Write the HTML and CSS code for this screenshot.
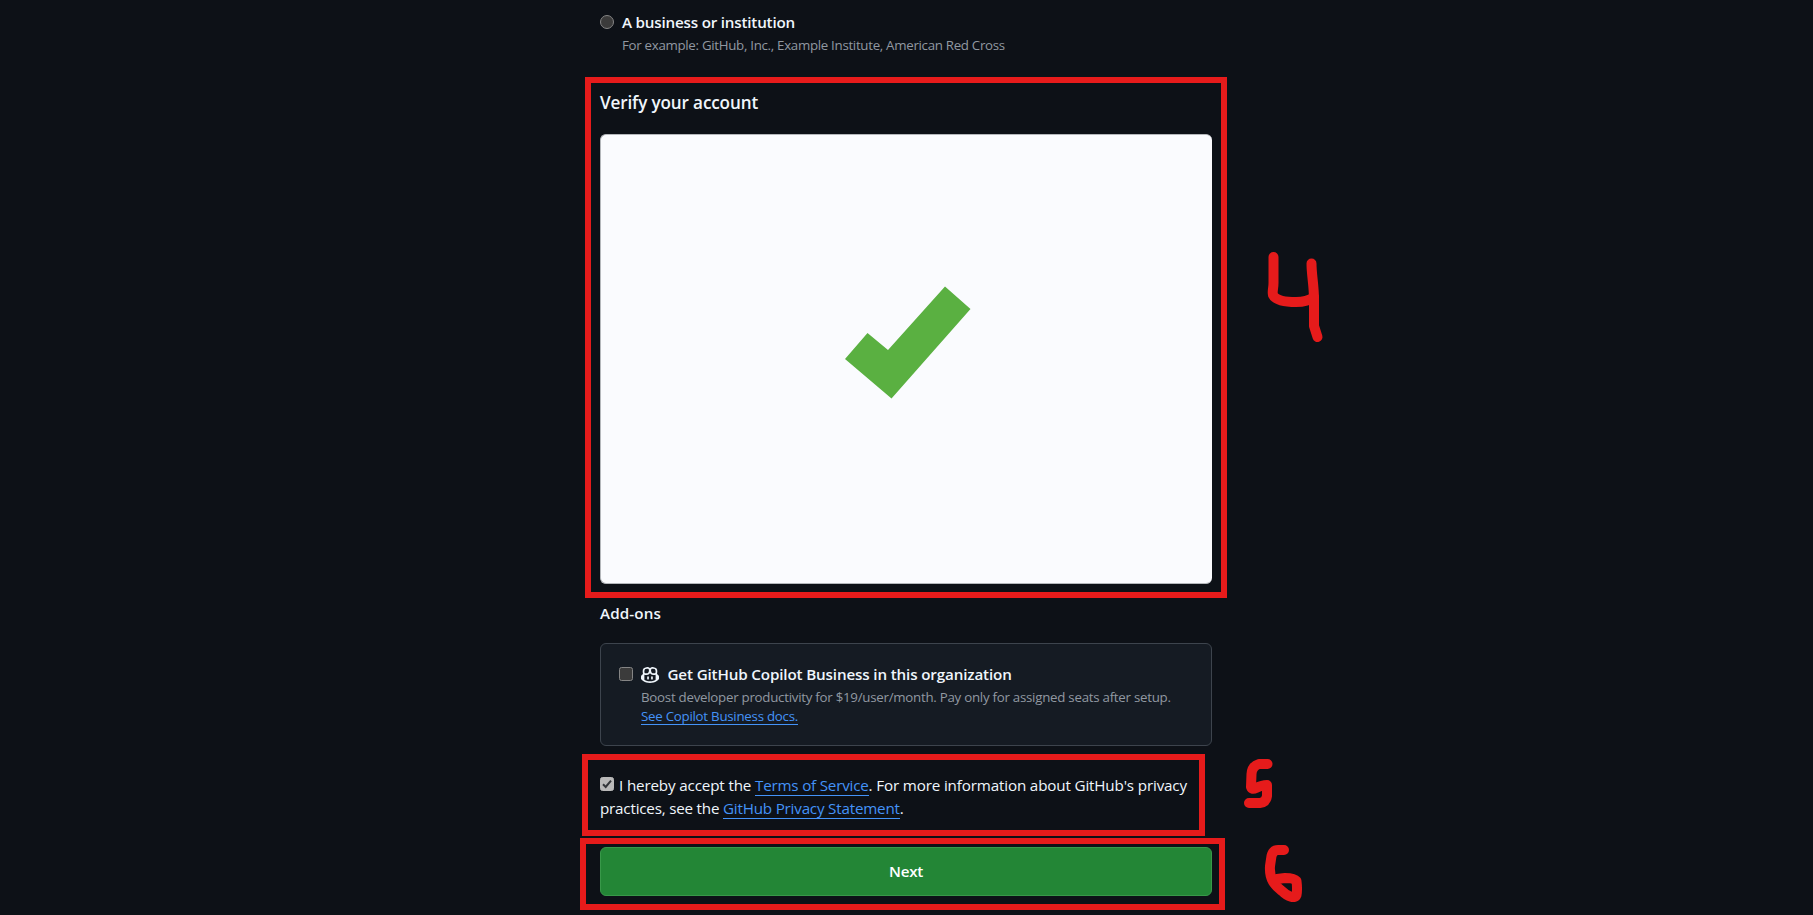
FILE: index.html
```
<!DOCTYPE html>
<html lang="en">
<head>
<meta charset="utf-8">
<title>Set up your organization</title>
<link rel="stylesheet" href="styles.css">
</head>
<body>
<main class="form">
  <div class="option">
    <span class="radio"></span>
    <div>
      <div class="option-title">A business or institution</div>
      <div class="option-note">For example: GitHub, Inc., Example Institute, American Red Cross</div>
    </div>
  </div>
  <h2 class="verify-title">Verify your account</h2>
  <div class="verify-panel">
    <svg class="tick" viewBox="0 0 126 113"><path d="M0 73 22.5 47 43 64 100 0.5 125.5 23 46.5 112.5Z"/></svg>
  </div>
  <h3 class="addons-title">Add-ons</h3>
  <section class="addon">
    <span class="box"></span>
    <div>
      <div class="addon-head">
        <svg class="copilot" viewBox="0 0 16 16"><path d="M7.998 15.035c-4.562 0-7.873-2.914-7.998-3.749V9.338c.085-.628.677-1.686 1.588-2.065.013-.07.024-.143.036-.218.029-.183.06-.384.126-.612-.201-.508-.254-1.084-.254-1.656 0-.87.128-1.769.693-2.484.579-.733 1.494-1.124 2.724-1.261 1.206-.134 2.262.034 2.944.765.05.053.096.108.139.165.044-.057.094-.112.143-.165.682-.731 1.738-.899 2.944-.765 1.23.137 2.145.528 2.724 1.261.566.715.693 1.614.693 2.484 0 .572-.053 1.148-.254 1.656.066.228.098.429.126.612.012.076.024.148.037.218.924.385 1.522 1.471 1.591 2.095v1.872c0 .766-3.351 3.795-8.002 3.795Zm0-1.485c2.28 0 4.584-1.11 5.002-1.433V7.862l-.023-.116c-.49.21-1.075.291-1.727.291-1.146 0-2.059-.327-2.71-.991A3.222 3.222 0 0 1 8 6.303a3.24 3.24 0 0 1-.544.743c-.65.664-1.563.991-2.71.991-.652 0-1.236-.081-1.727-.291l-.023.116v4.255c.419.323 2.722 1.433 5.002 1.433ZM6.762 2.83c-.193-.206-.637-.413-1.682-.297-1.019.113-1.479.404-1.713.7-.247.312-.369.789-.369 1.554 0 .793.129 1.171.308 1.371.162.181.519.379 1.442.379.853 0 1.339-.235 1.638-.54.315-.322.527-.827.617-1.553.117-.935-.037-1.395-.241-1.614Zm4.155-.297c-1.044-.116-1.488.091-1.681.297-.204.219-.359.679-.242 1.614.091.726.303 1.231.618 1.553.299.305.784.54 1.638.54.922 0 1.28-.198 1.442-.379.179-.2.308-.578.308-1.371 0-.765-.123-1.242-.37-1.554-.233-.296-.693-.587-1.713-.7Z"/><path d="M6.25 9.037a.75.75 0 0 1 .75.75v1.501a.75.75 0 0 1-1.5 0V9.787a.75.75 0 0 1 .75-.75Zm4.25.75v1.501a.75.75 0 0 1-1.5 0V9.787a.75.75 0 0 1 1.5 0Z"/></svg>
        <span class="addon-name">Get GitHub Copilot Business in this organization</span>
      </div>
      <div class="addon-note">Boost developer productivity for $19/user/month. Pay only for assigned seats after setup.</div>
      <a class="link docs">See Copilot Business docs.</a>
    </div>
  </section>
  <div class="terms">
    <div class="terms-line"><span class="box checked"><svg viewBox="0 0 14 14"><path d="M3 7.3 5.7 10 11 3.7"/></svg></span>I hereby accept the <a class="link">Terms of Service</a>. <span class="more">For more information about GitHub's privacy</span></div>
    <div class="terms-line second">practices, see the <a class="link">GitHub Privacy Statement</a>.</div>
  </div>
  <button class="next">Next</button>
</main>
<div class="frame frame-verify"></div>
<div class="frame frame-terms"></div>
<div class="frame frame-next"></div>
<svg class="marks" viewBox="0 0 1813 915">
  <path d="M1273.5 257V283C1273.5 289 1272 291 1273 295C1276 301 1288 302 1296 302C1304 302 1310 300 1314 297"/>
  <path d="M1311.5 263.5C1311.5 275 1314 285 1314 300V326L1317.5 337"/>
  <path d="M1267.5 764H1259Q1252 766 1251.500 774L1251 787Q1252 790 1256 788Q1262 785 1267 785V796Q1266 802.500 1260 803H1249"/>
  <path d="M1284 850H1278Q1273 850 1271.500 856L1270 866C1269 881 1276 886 1282 891C1288 897 1295 899 1296.500 895C1297.500 890 1297 885 1296.500 881Q1294 878 1285 878L1277 879"/>
</svg>
</body>
</html>
```

FILE: styles.css
```
* { box-sizing: border-box; }
body {
  margin: 0;
  height: 915px;
  overflow: hidden;
  background: #0d1117;
  color: #f0f6fc;
  font: 15.2px/23px "Open Sans", "Noto Sans", sans-serif;
}
.form { display: flex; flex-direction: column; width: 612px; margin-left: 600px; }
.option { display: flex; gap: 8px; height: 88px; padding-top: 11px; }
.radio {
  width: 14px; height: 14px; margin-top: 4px; flex: none;
  background: #3b3b3b; border: 1px solid #858585; border-radius: 50%;
}
.option-title { font-weight: 600; letter-spacing: -0.2px; white-space: nowrap; }
.option-note { font-size: 13.3px; letter-spacing: -0.3px; line-height: 22px; color: #9198a1; white-space: nowrap; }
.verify-title { margin: 2px 0 0; height: 44px; font-size: 17.1px; line-height: 26px; font-weight: 600; letter-spacing: -0.13px; }
.verify-panel {
  display: flex; height: 450px; padding: 152px 0 0 245px;
  background: #fafbfe; border: 1px solid #b4b7bb; border-width: 1px 0 1px 1px; border-radius: 6px;
}
.tick { width: 126px; height: 113px; margin-left: -1px; margin-top: -1.5px; fill: #5ab041; }
.addons-title { margin: 18px 0 0; height: 41px; font-size: 15.2px; line-height: 23px; font-weight: 600; letter-spacing: .122px; }
.addon {
  display: flex; gap: 8px; height: 103px; padding: 19px 18px;
  background: #151b23; border: 1px solid #3d444d; border-radius: 6px;
}
.box {
  display: inline-block; flex: none; width: 14px; height: 14px; margin-top: 4px;
  background: #3b3b3b; border: 1px solid #858585; border-radius: 2.5px;
}
.addon-head { display: flex; align-items: center; gap: 8.5px; height: 23px; }
.copilot { width: 18px; height: 18px; fill: #f0f6fc; }
.addon-name { font-weight: 600; letter-spacing: -0.145px; }
.addon-note { font-size: 13.3px; line-height: 22px; letter-spacing: -0.26px; color: #9198a1; white-space: nowrap; }
.link { color: #4493f8; border-bottom: 1px solid #4493f8; letter-spacing: -0.2px; }
.docs { display: block; width: 157px; height: 18px; margin-top: -1px; font-size: 13.3px; line-height: 18px; letter-spacing: -0.254px; }
.terms { height: 101px; padding-top: 28px; }
.terms-line { height: 23px; letter-spacing: -0.15px; white-space: nowrap; }
.second { letter-spacing: -0.2px; }
.checked { margin: 0 5px 0 0; background: #b9b9b9; border-color: #b9b9b9; vertical-align: 0; }
.checked svg { display: block; width: 14px; height: 14px; margin: -1px; fill: none; stroke: #33363a; stroke-width: 2; }
.next {
  height: 49px; padding: 0; color: #fff; background: #238636;
  border: 1px solid #389849; border-radius: 6px;
  font: 600 15.2px/23px "Open Sans", "Noto Sans", sans-serif; letter-spacing: -0.25px;
}
.frame { position: absolute; border: 6px solid #e61b1b; }
.frame-verify { left: 585px; top: 77px; width: 642px; height: 521px; }
.frame-terms { left: 582px; top: 754px; width: 623px; height: 82px; }
.frame-next { left: 580px; top: 838px; width: 645px; height: 72px; }
.marks {
  position: absolute; left: 0; top: 0; width: 1813px; height: 915px;
  fill: none; stroke: #e61b1b; stroke-width: 10; stroke-linecap: round; stroke-linejoin: round;
}
```
